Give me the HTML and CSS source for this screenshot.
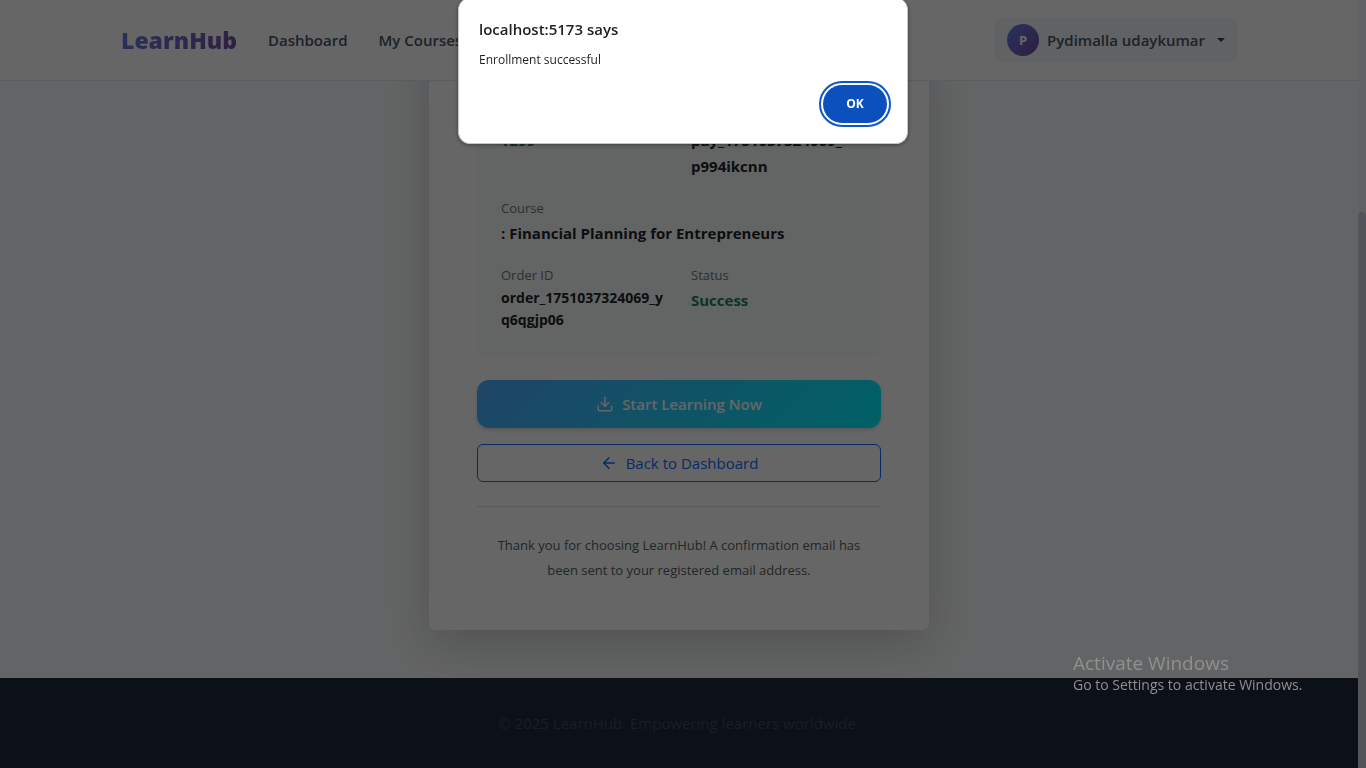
FILE: index.html
```html
<!DOCTYPE html>
<html lang="en">
<head>
<meta charset="utf-8">
<meta name="viewport" content="width=device-width, initial-scale=1">
<title>LearnHub</title>
<link rel="stylesheet" href="styles.css">
</head>
<body>
<div class="window">
  <div class="page">
    <header class="header">
      <div class="header-inner">
        <nav class="nav">
          <a class="brand" href="#">LearnHub</a>
          <a class="nav-link" href="#">Dashboard</a>
          <a class="nav-link" href="#">My Courses</a>
        </nav>
        <button class="user" type="button">
          <span class="avatar">P</span>
          <span>Pydimalla udaykumar</span>
          <span class="caret"></span>
        </button>
      </div>
    </header>
    <main class="main">
      <section class="card">
        <dl class="details">
          <div><dt>Amount</dt><dd class="green">₹299</dd></div>
          <div><dt>Payment ID</dt><dd>pay_1751037324069_<br>p994ikcnn</dd></div>
          <div class="wide"><dt>Course</dt><dd>: Financial Planning for Entrepreneurs</dd></div>
          <div><dt>Order ID</dt><dd class="small">order_1751037324069_y<br>q6qgjp06</dd></div>
          <div><dt>Status</dt><dd class="green">Success</dd></div>
        </dl>
        <button class="start" type="button">
          <svg width="18" height="18" viewBox="0 0 24 24" fill="none" stroke="currentColor" stroke-width="2" stroke-linecap="round" stroke-linejoin="round"><path d="M21 15v4a2 2 0 0 1-2 2H5a2 2 0 0 1-2-2v-4"/><path d="M7 10l5 5 5-5"/><path d="M12 15V3"/></svg>
          Start Learning Now
        </button>
        <button class="back" type="button">
          <svg width="18" height="18" viewBox="0 0 24 24" fill="none" stroke="currentColor" stroke-width="2" stroke-linecap="round" stroke-linejoin="round"><path d="M19 12H5"/><path d="M12 19l-7-7 7-7"/></svg>
          Back to Dashboard
        </button>
        <p class="thanks">Thank you for choosing LearnHub! A confirmation email has been sent to your registered email address.</p>
      </section>
    </main>
    <footer class="footer">© 2025 LearnHub. Empowering learners worldwide.</footer>
  </div>
  <div class="scrollbar"><div class="thumb"></div></div>
</div>
<div class="backdrop"></div>
<div class="alert" role="alertdialog" aria-labelledby="alert-title" aria-describedby="alert-text">
  <h2 class="alert-title" id="alert-title">localhost:5173 says</h2>
  <p class="alert-text" id="alert-text">Enrollment successful</p>
  <button class="ok" type="button">OK</button>
</div>
<div class="watermark">
  <div class="watermark-title">Activate Windows</div>
  <div class="watermark-text">Go to Settings to activate Windows.</div>
</div>
</body>
</html>
```

FILE: styles.css
```css
* { box-sizing: border-box; }
body { margin: 0; font-family: "Open Sans", "Noto Sans", sans-serif; font-size: 15px; line-height: 24px; color: #212529; }
button { font: inherit; }
a { text-decoration: none; }
.window { display: flex; height: 100vh; overflow: hidden; }
.page { flex: 1; min-width: 0; display: flex; flex-direction: column; }
.scrollbar { width: 8px; background: #f1f5f9; display: flex; flex-direction: column; justify-content: flex-end; }
.thumb { height: 72.4%; background: #cbd5e1; border-radius: 4px 4px 0 0; }

.header { background: #fff; border-bottom: 1px solid #e2e8f0; height: 81px; flex: none; display: flex; justify-content: center; }
.header-inner { flex: 1; max-width: 1116px; display: flex; align-items: center; justify-content: space-between; }
.nav { display: flex; align-items: center; gap: 31px; }
.brand { font-size: 23px; line-height: 32px; font-weight: 800; color: transparent; background: linear-gradient(135deg, #667eea, #764ba2); -webkit-background-clip: text; background-clip: text; }
.nav-link { font-weight: 600; color: #475569; }
.user { display: flex; align-items: center; gap: 8px; height: 44px; padding: 0 12px; border: 0; border-radius: 6px; background: #f1f5f9; color: #475569; font-weight: 600; }
.avatar { width: 32px; height: 32px; border-radius: 50%; background: linear-gradient(135deg, #667eea, #764ba2); color: #fff; font-size: 13px; line-height: 33px; font-weight: 700; text-align: center; }
.caret { margin-left: 4px; border: 4px solid transparent; border-top-color: #334155; border-bottom: 0; }

.main { flex: 1; min-height: 0; overflow: hidden; background: #f8fafc; display: flex; align-items: flex-end; justify-content: center; padding-bottom: 48px; }
.card { width: 500px; max-width: 100%; padding: 48px 48px 47px; background: #fff; border-radius: 6px; box-shadow: 0 16px 48px rgba(0, 0, 0, .175); }
.details { margin: 0 0 24px; padding: 24px 24px 25px; border-radius: 8px; background: #f8fcfa; display: grid; grid-template-columns: 1fr 1fr; gap: 18px 24px; }
.details .wide { grid-column: 1 / -1; }
.details dt { font-size: 13px; line-height: 22px; margin-bottom: 1px; color: #6c757d; }
.details dd { margin: 0; line-height: 26px; font-weight: 700; overflow-wrap: anywhere; }
.details .small { font-size: 14px; line-height: 22px; }
.details .green { color: #198754; }
.start, .back { width: 100%; display: flex; align-items: center; justify-content: center; gap: 8px; }
.start { height: 48px; margin-bottom: 16px; border: 0; border-radius: 12px; color: #fff; font-weight: 600; background: linear-gradient(135deg, #4facfe, #00f2fe); box-shadow: 0 2px 4px rgba(0, 0, 0, .15); }
.back { height: 38px; border: 1px solid #0d6efd; border-radius: 6px; background: #fff; color: #0d6efd; }
.thanks { margin: 24px 0 0; padding: 26px 8px 0; border-top: 1px solid #dee2e6; font-size: 13px; line-height: 25px; text-align: center; color: #565e66; }
.footer { flex: none; padding: 33px 24px; background: #1e293b; color: #414d5e; text-align: center; }

.backdrop { position: fixed; inset: 0; background: rgba(0, 0, 0, .6); }
.alert { position: fixed; top: -2px; left: 0; right: 0; margin: 0 auto; width: 450px; max-width: 100%; padding: 19px 20px 18px; background: #fff; border: 1px solid #c7c7c7; border-top: 0; border-radius: 12px; box-shadow: 0 1px 4px rgba(0, 0, 0, .4); display: flex; flex-direction: column; }
.alert-title { margin: 0 0 10px; font-size: 15px; line-height: 24px; font-weight: 600; color: #1f1f1f; }
.alert-text { margin: 0 0 16px; font-size: 12px; line-height: 18px; color: #1f1f1f; }
.ok { align-self: flex-end; width: 64px; height: 38px; margin-bottom: 2px; border: 0; border-radius: 19px; background: #0b50bd; color: #fff; font-size: 12px; font-weight: 700; outline: 2px solid #0b57d0; outline-offset: 2px; }
.watermark { position: fixed; right: 57px; bottom: 73px; width: 236px; color: #909090; }
.watermark-title { font-size: 19px; line-height: 24px; }
.watermark-text { font-size: 14px; line-height: 20px; }
```
